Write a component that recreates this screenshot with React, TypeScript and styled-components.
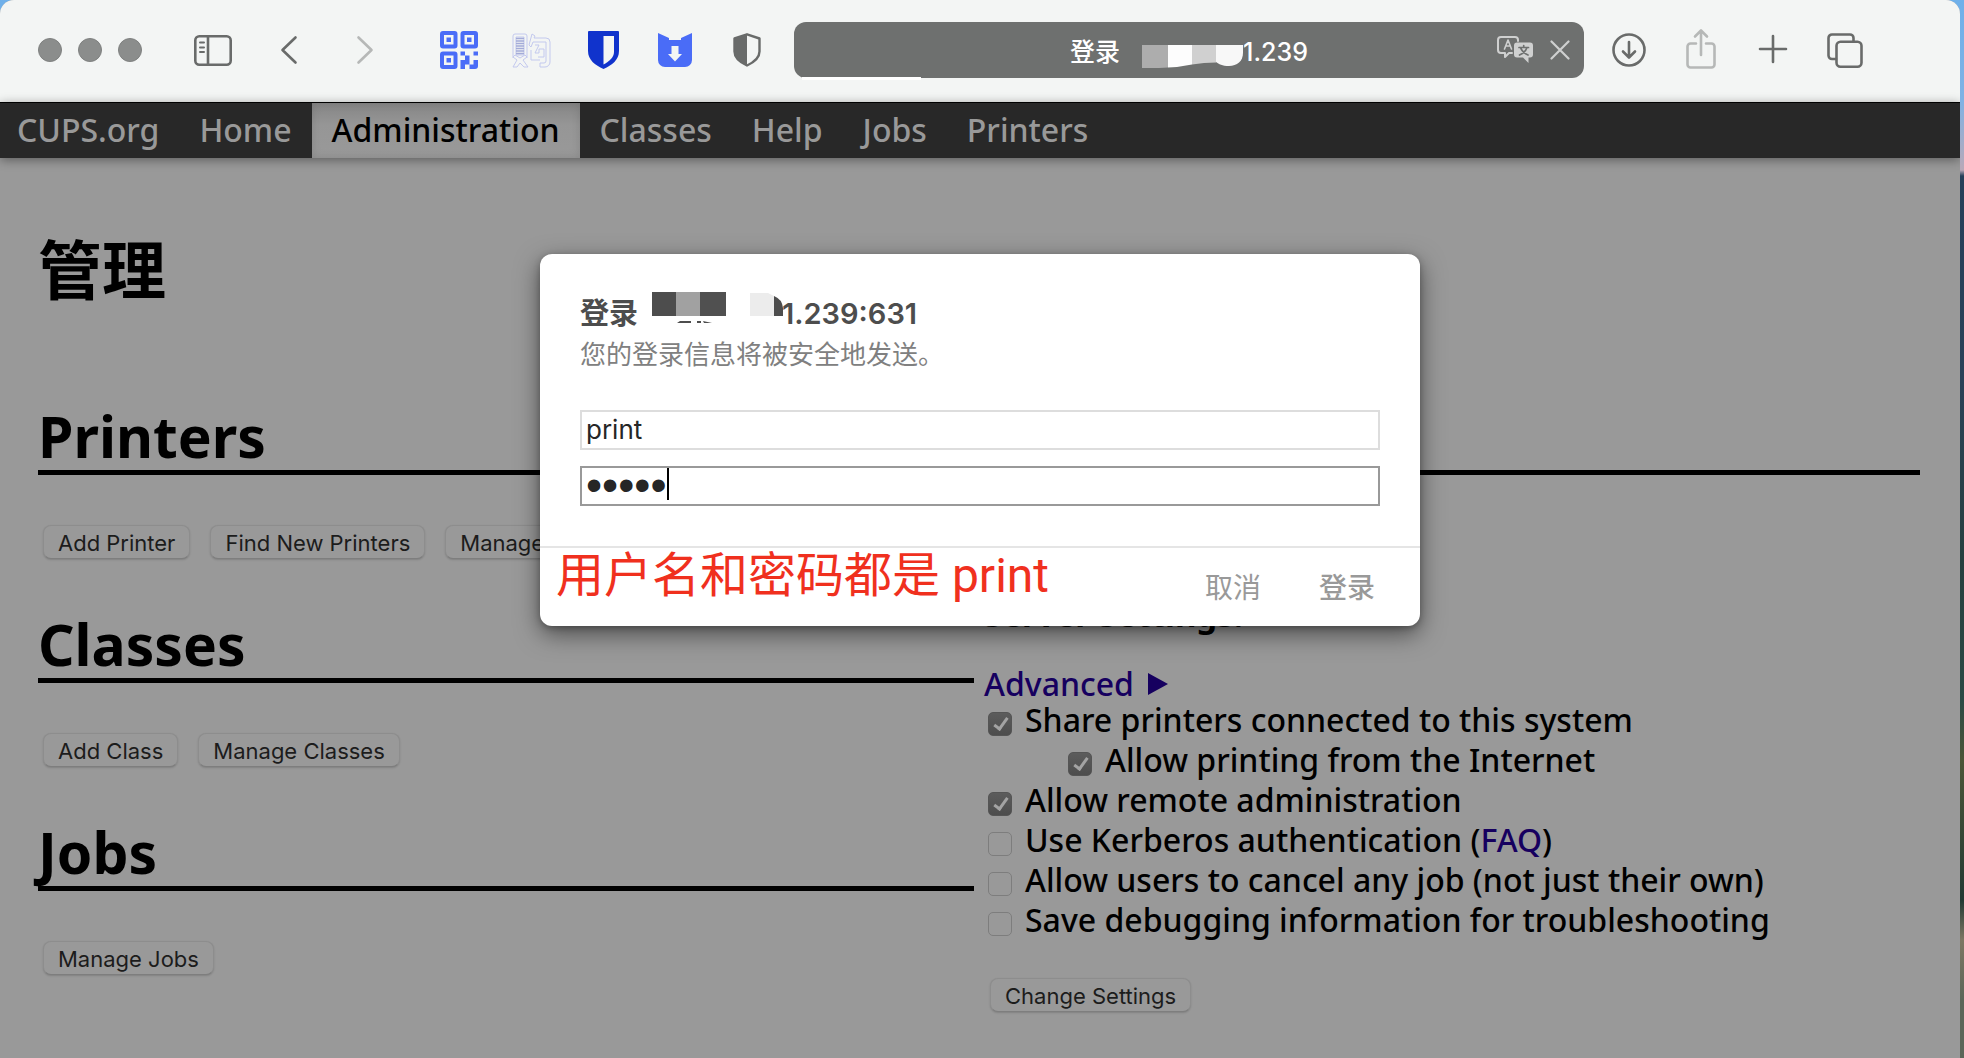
import React, { useState } from 'react';
import styled, { createGlobalStyle, css } from 'styled-components';

const humanist = `"Noto Sans", "Open Sans", "Noto Sans CJK SC", sans-serif`;
const system = `Inter, "Noto Sans CJK SC", sans-serif`;

const GlobalStyle = createGlobalStyle`
  *, *::before, *::after { box-sizing: border-box; }
  html, body { margin: 0; padding: 0; }
  button, input { font: inherit; color: inherit; margin: 0; }
  h1, h2, h3, p { margin: 0; }
`;

const Desktop = styled.div`
  min-height: 100vh;
  display: flex;
  padding-right: 4px;
  overflow: hidden;
  background: linear-gradient(180deg, #6fb0ea 0, #7fb2e4 100px, #b9a9b8 170px, #25405a 176px, #2a4258 380px, #26403f 560px, #2b4a45 700px, #4c5638 760px, #223a33 900px, #7d7763 940px, #5b6658 1000px);
`;

const BrowserWindow = styled.div`
  flex: 1;
  min-width: 0;
  display: flex;
  flex-direction: column;
  border-radius: 14px 14px 0 0;
  overflow: hidden;
  background: #999;
`;

const Toolbar = styled.header`
  display: flex;
  align-items: center;
  height: 102px;
  padding: 0 96px 2px 38px;
  background: #f3f5f4;
  color: #696b6a;
`;

const Lights = styled.div`
  display: flex;
  gap: 16px;
  margin-right: 52px;
`;

const Light = styled.button`
  width: 24px;
  height: 24px;
  padding: 0;
  border: 1px solid #7f8180;
  border-radius: 50%;
  background: #8b8d8c;
`;

const ButtonGroup = styled.div<{ $gap: number; $after: number }>`
  display: flex;
  flex: none;
  gap: ${(p) => p.$gap}px;
  margin-right: ${(p) => p.$after}px;
`;

const IconButton = styled.button<{ $faded?: boolean }>`
  display: flex;
  align-items: center;
  justify-content: center;
  width: 38px;
  height: 40px;
  padding: 0;
  border: 0;
  background: none;
  color: ${(p) => (p.$faded ? '#b6b8b7' : 'inherit')};
  svg { display: block; overflow: visible; }
`;

const AddressBar = styled.div`
  position: relative;
  flex: 1;
  min-width: 0;
  display: grid;
  grid-template-columns: 1fr auto 1fr;
  align-items: center;
  height: 56px;
  margin-right: 26px;
  padding: 0 14px;
  border-radius: 12px;
  background: #6e706f;
  color: #fff;
  font: 500 25px/36px ${system};
  &::after {
    content: '';
    position: absolute;
    left: 8px;
    bottom: -2px;
    width: 15%;
    height: 3px;
    background: #fff;
  }
`;

const Address = styled.div`
  grid-column: 2;
  display: flex;
  align-items: center;
  padding-top: 4px;
  white-space: nowrap;
  svg { display: block; margin: 9px 0 0 22px; }
`;

const AddressActions = styled.div`
  display: flex;
  justify-content: flex-end;
  align-items: center;
  gap: 16px;
  color: #cfd0d0;
`;

const PlainIcon = styled.button`
  display: flex;
  padding: 0;
  border: 0;
  background: none;
`;

const Page = styled.div`
  position: relative;
  flex: 1;
  background: #999;
  color: #000;
  font: 500 32px/40px ${humanist};
`;

const Nav = styled.nav`
  display: flex;
  height: 56px;
  border-top: 1px solid #000;
  background: #282828;
  box-shadow: 0 2px 10px rgba(0, 0, 0, 0.4);
`;

const NavLink = styled.a<{ $active?: boolean }>`
  display: flex;
  align-items: center;
  padding: 0 20px 2px;
  text-decoration: none;
  color: #999;
  &:first-child { padding-left: 17px; }
  ${(p) => p.$active && css`
    color: #000;
    background: linear-gradient(#858585, #969696 40%, #999);
    box-shadow: inset 0 0 10px rgba(0, 0, 0, 0.12);
  `}
`;

const Main = styled.main`
  padding: 60px 40px 44px 38px;
`;

const PageTitle = styled.h1`
  margin-bottom: 92px;
  font: 700 64px/96px "Noto Sans CJK SC", sans-serif;
`;

const SectionTitle = styled.h2`
  margin-bottom: 50px;
  padding-bottom: 4px;
  border-bottom: 5px solid #000;
  font-size: 57px;
  line-height: 60px;
`;

const Columns = styled.div`
  display: grid;
  grid-template-columns: 1fr 1fr;
  column-gap: 10px;
`;

const LeftColumn = styled.div`
  display: flex;
  flex-direction: column;
  gap: 55px;
  padding-top: 55px;
`;

const Settings = styled.form`
  padding-top: 36px;
`;

const ButtonRow = styled.div`
  display: flex;
  gap: 20px;
  padding-left: 5px;
`;

const PushButton = styled.button`
  height: 34px;
  padding: 2px 14px 0;
  border: 1px solid #8d8d8d;
  border-bottom-color: #7e7e7e;
  border-radius: 8px;
  background: #999;
  box-shadow: 0 1px 2px rgba(0, 0, 0, 0.16);
  color: #1c1c1c;
  font: 22px/30px ${system};
  white-space: nowrap;
`;

const SettingsTitle = styled.h3`
  margin-bottom: 32px;
  font-size: 33px;
  line-height: 40px;
`;

const Link = styled.a`
  color: #16005f;
  text-decoration: none;
`;

const AdvancedLink = styled(Link)`
  display: flex;
  align-items: center;
  gap: 14px;
  width: fit-content;
  height: 33px;
`;

const OptionRow = styled.div<{ $nested?: boolean }>`
  display: flex;
  align-items: center;
  padding-left: ${(p) => (p.$nested ? 84 : 4)}px;
  white-space: nowrap;
`;

const Checkbox = styled.input`
  appearance: none;
  position: relative;
  width: 24px;
  height: 24px;
  margin: 8px 13px 0 0;
  border: 1px solid #7d7d7d;
  border-radius: 5px;
  background: #999;
  &:checked {
    border-color: #555;
    background: linear-gradient(#5c5c5c, #4d4d4d);
  }
  &:checked::after {
    content: '';
    position: absolute;
    left: 8px;
    top: 2px;
    width: 8px;
    height: 15px;
    border: solid #a3a3a3;
    border-width: 0 3px 3px 0;
    transform: rotate(36deg);
  }
`;

const SubmitRow = styled.div`
  display: flex;
  margin-top: 38px;
  padding-left: 6px;
`;

const Dialog = styled.form`
  position: absolute;
  top: 152px;
  left: 0;
  right: 0;
  width: 880px;
  max-width: 100%;
  margin: 0 auto;
  border-radius: 12px;
  background: #fff;
  box-shadow: 0 8px 24px rgba(0, 0, 0, 0.5), 0 2px 6px rgba(0, 0, 0, 0.25);
  font-family: ${system};
  font-weight: 400;
`;

const DialogBody = styled.div`
  padding: 38px 40px 40px;
`;

const DialogTitle = styled.h2`
  display: flex;
  align-items: center;
  color: #4d4d4d;
  font-size: 29px;
  font-weight: 600;
  line-height: 44px;
  svg { display: block; margin-left: 14px; overflow: visible; }
`;

const DialogNote = styled.p`
  margin-bottom: 36px;
  color: #808080;
  font-size: 26px;
  line-height: 38px;
`;

const Field = styled.div`
  position: relative;
  margin-top: 16px;
`;

const TextInput = styled.input`
  display: block;
  width: 100%;
  height: 40px;
  padding: 0 4px 2px;
  border: 2px solid #ddd;
  border-radius: 0;
  outline: 0;
  background: #fff;
  color: #262626;
  font: 400 26px/34px ${system};
`;

const PasswordInput = styled(TextInput)`
  border-color: #999;
  font: 46px/34px "Liberation Sans", sans-serif;
`;

const Caret = styled.span`
  position: absolute;
  left: 87px;
  top: 2px;
  width: 2px;
  height: 32px;
  background: #000;
`;

const DialogFooter = styled.div`
  position: relative;
  display: flex;
  justify-content: flex-end;
  gap: 58px;
  padding: 20px 45px 18px;
  border-top: 2px solid #e5e5e5;
`;

const DialogButton = styled.button<{ $strong?: boolean }>`
  padding: 0;
  border: 0;
  background: none;
  color: #999;
  font-size: 28px;
  line-height: 40px;
  font-weight: ${(p) => (p.$strong ? 500 : 400)};
`;

const Annotation = styled.span`
  position: absolute;
  left: 16px;
  top: 0;
  color: #f0301e;
  font: 48px/56px Roboto, "Noto Sans CJK SC", sans-serif;
  white-space: nowrap;
`;

const stroke = { fill: 'none', stroke: 'currentColor', strokeWidth: 2.6, strokeLinecap: 'round', strokeLinejoin: 'round' } as const;

const SidebarIcon = () => (
  <svg width="38" height="31" viewBox="0 0 38 31" {...stroke}>
    <rect x="1.3" y="1.3" width="35.4" height="28.4" rx="4" />
    <path d="M14 1.5v28" />
    <path d="M6 7.5h4M6 12.5h4M6 17h4" strokeWidth="2" />
  </svg>
);
const BackIcon = () => (
  <svg width="16" height="28" viewBox="0 0 16 28" {...stroke}><path d="M14.5 1.5 1.5 14l13 12.500" /></svg>
);
const ForwardIcon = () => (
  <svg width="16" height="28" viewBox="0 0 16 28" {...stroke}><path d="M1.500 1.500 14.500 14l-13 12.500" /></svg>
);
const QrIcon = () => (
  <svg width="38" height="38" viewBox="0 0 38 38" fill="#4a6cf7">
    {[[0, 0], [20.5, 0], [0, 20.5]].map(([x, y]) => (
      <g key={`${x}-${y}`} transform={`translate(${x} ${y})`}>
        <rect x="2" y="2" width="13.5" height="13.5" rx="1" fill="none" stroke="#4a6cf7" strokeWidth="4" />
        <rect x="6.5" y="6.5" width="4.5" height="4.5" />
      </g>
    ))}
    <path d="M20.500 20.500h4.500v4h-4.500zM25 24.500h4.500v4.500h-4.500v4.500h-4.500v-4.500h4.500zM29.500 24.500h4v-4H38v4h-4.500v0h-4zM25 29h4.500v4.500h-4.500zM33.500 29H38v6a3 3 0 0 1-3 3h-5.500v-4.500h4zM20.500 33.500h4.500v4.500h-4.500z" />
  </svg>
);
const CouponIcon = () => (
  <svg width="38" height="35" viewBox="0 0 38 35" fill="none" stroke="#c3c9ee" strokeWidth="1">
    <path d="M1 25V3a2 2 0 0 1 2-2h10a2 2 0 0 1 2 2v22M4 4h8v18H4z" />
    <path d="M4 5.500h8M4 8h8M4 10.500h8M4 13h8M4 15.500h8M4 18h8M4 20.500h8" stroke="#a3abd8" strokeWidth="1.600" />
    <path d="M1 24l4 3-4 7h4l3-4 4 4h4l-5-7 4-3-2-2-5 3-5-3z" />
    <path d="M20 1l3 2-1 2h12a4 4 0 0 1 4 4v20a5 5 0 0 1-5 5h-5v-4h4a2 2 0 0 0 2-2V9H21l-2 5-2-2zM23 12l4 0-4 8h4v-4h5v8h-6M19 17v10h9" />
  </svg>
);
const VaultIcon = () => (
  <svg width="31" height="38" viewBox="0 0 31 38">
    <path d="M1 0h29a1 1 0 0 1 1 1v19c0 9-7 14-15.500 18C7 34 0 29 0 20V1a1 1 0 0 1 1-1z" fill="#1033cc" />
    <path d="M15.500 5H26v16c0 5-4 9-10.500 12.500z" fill="#f3f5f4" />
  </svg>
);
const CatDownloadIcon = () => (
  <svg width="34" height="34" viewBox="0 0 34 34">
    <path d="M0 0l11 5v2h12V5l11-5v27a7 7 0 0 1-7 7H7a7 7 0 0 1-7-7z" fill="#4a6cf7" />
    <path d="M13.500 13h7v8H24l-7 7.500-7-7.500h3.500z" fill="#f3f5f4" />
  </svg>
);
const ShieldIcon = () => (
  <svg width="28" height="34" viewBox="0 0 28 34">
    <path d="M14 1.300 26.500 5.500v13c0 6-5 10.500-12.500 14-7.500-3.500-12.500-8-12.500-14v-13z" fill="none" stroke="currentColor" strokeWidth="2.400" strokeLinejoin="round" />
    <path d="M14 1 1.500 5.500v13c0 6 5 10.500 12.500 14z" fill="currentColor" />
  </svg>
);
const DownloadIcon = () => (
  <svg width="34" height="34" viewBox="0 0 34 34" {...stroke}>
    <circle cx="17" cy="17" r="15.5" /><path d="M17 9v15M11 18.500l6 6 6-6" />
  </svg>
);
const ShareIcon = () => (
  <svg width="30" height="38" viewBox="0 0 30 38" {...stroke}>
    <path d="M10 12.500H4.500a3 3 0 0 0-3 3v18a3 3 0 0 0 3 3h21a3 3 0 0 0 3-3v-18a3 3 0 0 0-3-3H20M15 24V0M9 5.500 15-.500l6 6" />
  </svg>
);
const PlusIcon = () => (
  <svg width="28" height="28" viewBox="0 0 28 28" {...stroke}><path d="M14 0v26M1 13h26" /></svg>
);
const TabsIcon = () => (
  <svg width="36" height="35" viewBox="0 0 36 35" {...stroke}>
    <rect x="9.5" y="8.7" width="25" height="25" rx="4" />
    <path d="M9 26H5a3.500 3.500 0 0 1-3.500-3.500V5A3.500 3.500 0 0 1 5 1.500h18A3.500 3.500 0 0 1 26.500 5v3" />
  </svg>
);
const TranslateIcon = () => (
  <svg width="37" height="28" viewBox="0 0 37 28" fill="none" stroke="#cfd0d0" strokeWidth="2" strokeLinecap="round" strokeLinejoin="round">
    <path d="M15 17h-3l-4 4v-4H4a3 3 0 0 1-3-3V4a3 3 0 0 1 3-3h14a3 3 0 0 1 3 3v1" />
    <path d="M7.500 13 11 4l3.500 9M8.700 10h4.600" strokeWidth="1.600" />
    <path d="M20 6.500h13a3 3 0 0 1 3 3v9a3 3 0 0 1-3 3h-1.500V27L26 21.500h-6a3 3 0 0 1-3-3v-9a3 3 0 0 1 3-3z" fill="#cfd0d0" stroke="none" />
    <path d="M22 11.500h9.500M26.700 9.500v2M30 11.500c-1 3-4 6-7.500 7.500M23.500 11.500c1 3 4 6 7.500 7.500" stroke="#6e706f" strokeWidth="1.700" />
  </svg>
);
const StopIcon = () => (
  <svg width="20" height="20" viewBox="0 0 20 20" fill="none" stroke="#cfd0d0" strokeWidth="2.200" strokeLinecap="round">
    <path d="M1.500 1.500l17 17M18.500 1.500l-17 17" />
  </svg>
);
const Triangle = () => (
  <svg width="20" height="22" viewBox="0 0 20 22"><path d="M0 0l20 11L0 22z" fill="#16005f" /></svg>
);

/* Pixelated censor patches that hide the first part of the host address. */
const AddressMask = () => (
  <svg width="101" height="23" viewBox="0 0 101 23" aria-hidden="true">
    <path d="M0 0h26v22.500Q12 23.500 0 23z" fill="#adadad" />
    <path d="M26 0h24v19.500Q38 22 26 22.500z" fill="#fdfdfd" />
    <path d="M50 0h24v17.500Q62 17.500 50 19.500z" fill="#d0d0d0" />
    <path d="M74 0h27v8c0 8-6 13-14 13-7 0-10-2-13-4z" fill="#f8f8f8" />
  </svg>
);
const TitleMask = () => (
  <svg width="130" height="44" viewBox="0 0 130 44" aria-hidden="true">
    <path d="M0 0h24v24H0z" fill="#4d4d4d" />
    <path d="M24 0h24v24H24z" fill="#a1a1a1" />
    <path d="M48 0h26v24H48z" fill="#505050" />
    <path d="M98 1h18l6 3v20H98z" fill="#ececec" />
    <path d="M122 4q8 3 9 12v8h-9z" fill="#4d4d4d" />
    <path d="M25 31l3-2h11v2zM45 29h4v2h-4zM51 29l9 2h-8z" fill="#4d4d4d" />
  </svg>
);

const navItems = ['CUPS.org', 'Home', 'Administration', 'Classes', 'Help', 'Jobs', 'Printers'];

const sections = [
  { title: 'Classes', actions: ['Add Class', 'Manage Classes'] },
  { title: 'Jobs', actions: ['Manage Jobs'] },
];

const options: { id: string; label: React.ReactNode; on?: boolean; nested?: boolean }[] = [
  { id: 'share', label: 'Share printers connected to this system', on: true },
  { id: 'internet', label: 'Allow printing from the Internet', on: true, nested: true },
  { id: 'remote', label: 'Allow remote administration', on: true },
  { id: 'kerberos', label: <>Use Kerberos authentication (<Link href="#faq">FAQ</Link>)</> },
  { id: 'cancel', label: 'Allow users to cancel any job (not just their own)' },
  { id: 'debug', label: 'Save debugging information for troubleshooting' },
];

function Section({ title, actions }: { title: string; actions: string[] }) {
  return (
    <section>
      <SectionTitle>{title}</SectionTitle>
      <ButtonRow>
        {actions.map((a) => <PushButton key={a} type="button">{a}</PushButton>)}
      </ButtonRow>
    </section>
  );
}

function LoginDialog() {
  const [user, setUser] = useState('print');
  const [password, setPassword] = useState('print');
  return (
    <Dialog role="dialog" aria-labelledby="login-title" onSubmit={(e) => e.preventDefault()}>
      <DialogBody>
        <DialogTitle id="login-title">登录<TitleMask />1.239:631</DialogTitle>
        <DialogNote>您的登录信息将被安全地发送。</DialogNote>
        <Field>
          <TextInput type="text" aria-label="用户名" value={user} onChange={(e) => setUser(e.target.value)} />
        </Field>
        <Field>
          <PasswordInput type="password" aria-label="密码" value={password} onChange={(e) => setPassword(e.target.value)} />
          <Caret />
        </Field>
      </DialogBody>
      <DialogFooter>
        <Annotation>用户名和密码都是 print</Annotation>
        <DialogButton type="button">取消</DialogButton>
        <DialogButton type="submit" $strong>登录</DialogButton>
      </DialogFooter>
    </Dialog>
  );
}

export default function App() {
  return (
    <Desktop>
      <GlobalStyle />
      <BrowserWindow>
        <Toolbar>
          <Lights>
            <Light aria-label="Close" />
            <Light aria-label="Minimize" />
            <Light aria-label="Zoom" />
          </Lights>
          <ButtonGroup $gap={38} $after={56}>
            <IconButton aria-label="Sidebar"><SidebarIcon /></IconButton>
            <IconButton aria-label="Back"><BackIcon /></IconButton>
            <IconButton aria-label="Forward" $faded><ForwardIcon /></IconButton>
          </ButtonGroup>
          <ButtonGroup $gap={34} $after={28}>
            <IconButton aria-label="QR code"><QrIcon /></IconButton>
            <IconButton aria-label="Shopping"><CouponIcon /></IconButton>
            <IconButton aria-label="Passwords"><VaultIcon /></IconButton>
            <IconButton aria-label="Save media"><CatDownloadIcon /></IconButton>
            <IconButton aria-label="Privacy report"><ShieldIcon /></IconButton>
          </ButtonGroup>
          <AddressBar>
            <Address>登录<AddressMask />1.239</Address>
            <AddressActions>
              <PlainIcon aria-label="Translate"><TranslateIcon /></PlainIcon>
              <PlainIcon aria-label="Stop"><StopIcon /></PlainIcon>
            </AddressActions>
          </AddressBar>
          <ButtonGroup $gap={34} $after={0}>
            <IconButton aria-label="Downloads"><DownloadIcon /></IconButton>
            <IconButton aria-label="Share" $faded><ShareIcon /></IconButton>
            <IconButton aria-label="New tab"><PlusIcon /></IconButton>
            <IconButton aria-label="Tab overview"><TabsIcon /></IconButton>
          </ButtonGroup>
        </Toolbar>
        <Page>
          <Nav>
            {navItems.map((item) => (
              <NavLink key={item} href={`#${item}`} $active={item === 'Administration'}>{item}</NavLink>
            ))}
          </Nav>
          <Main>
            <PageTitle>管理</PageTitle>
            <Section title="Printers" actions={['Add Printer', 'Find New Printers', 'Manage Printers']} />
            <Columns>
              <LeftColumn>
                {sections.map((s) => <Section key={s.title} {...s} />)}
              </LeftColumn>
              <Settings onSubmit={(e) => e.preventDefault()}>
                <SettingsTitle>Server Settings:</SettingsTitle>
                <AdvancedLink href="#advanced">Advanced<Triangle /></AdvancedLink>
                {options.map((o) => (
                  <OptionRow key={o.id} $nested={o.nested}>
                    <Checkbox type="checkbox" id={o.id} defaultChecked={o.on} />
                    <label htmlFor={o.id}>{o.label}</label>
                  </OptionRow>
                ))}
                <SubmitRow><PushButton type="submit">Change Settings</PushButton></SubmitRow>
              </Settings>
            </Columns>
          </Main>
          <LoginDialog />
        </Page>
      </BrowserWindow>
    </Desktop>
  );
}
